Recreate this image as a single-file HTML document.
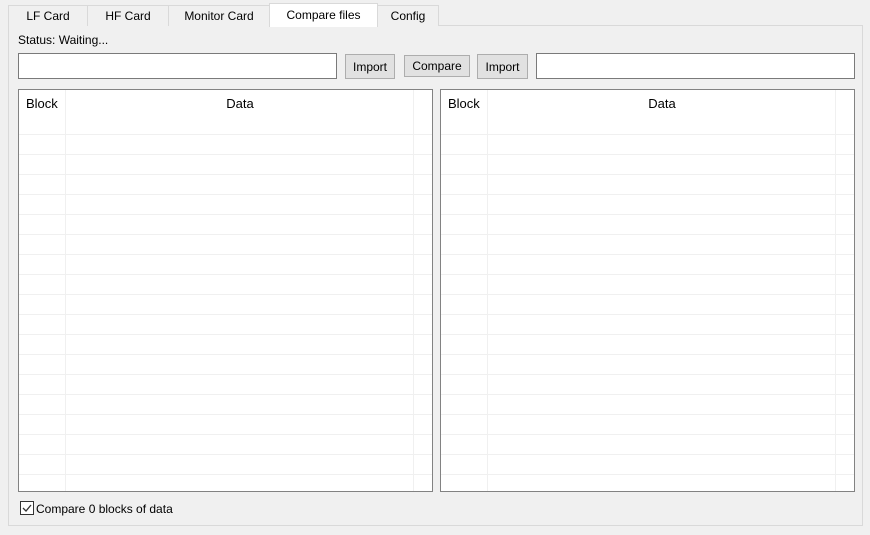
<!DOCTYPE html>
<html><head><style>
body{margin:0;width:870px;height:535px;background:#f0f0f0;font-family:"Liberation Sans",sans-serif;font-size:12px;color:#000;position:relative;overflow:hidden}
.a{position:absolute;box-sizing:border-box}
.tab{position:absolute;top:5px;height:21px;border:1px solid #d9d9d9;border-bottom:none;background:#f0f0f0;text-align:center;line-height:21px;box-sizing:border-box}
.tb{background:#fff;border:1px solid #7a7a7a}
.btn{background:#e1e1e1;border:1px solid #adadad;text-align:center}
.grid{background:#fff;border:1px solid #828282;overflow:hidden}
</style></head><body>
<div class="a" style="left:8px;top:25px;width:855px;height:501px;border:1px solid #d9d9d9;background:#f0f0f0"></div>
<div class="tab" style="left:8px;width:80px">LF Card</div>
<div class="tab" style="left:87px;width:82px">HF Card</div>
<div class="tab" style="left:168px;width:102px">Monitor Card</div>
<div class="tab" style="left:377px;width:62px">Config</div>
<div class="tab" style="left:269px;top:3px;height:24px;width:109px;background:#fff;line-height:23px;z-index:2">Compare files</div>
<div class="a" style="left:18px;top:33px">Status: Waiting...</div>
<div class="a tb" style="left:18px;top:53px;width:319px;height:26px"></div>
<div class="a btn" style="left:345px;top:54px;width:50px;height:25px;line-height:24px">Import</div>
<div class="a btn" style="left:404px;top:55px;width:66px;height:22px;line-height:20px">Compare</div>
<div class="a btn" style="left:477px;top:54px;width:51px;height:25px;line-height:24px">Import</div>
<div class="a tb" style="left:536px;top:53px;width:319px;height:26px"></div>

<div class="a grid" style="left:18px;top:89px;width:415px;height:403px">
<svg width="413" height="401" style="position:absolute;left:0;top:0">
<g stroke="#f0f0f0" stroke-width="1">
<line x1="46.5" y1="0" x2="46.5" y2="401"/><line x1="394.5" y1="0" x2="394.5" y2="401"/>
<path d="M0 44.5H413M0 64.5H413M0 84.5H413M0 104.5H413M0 124.5H413M0 144.5H413M0 164.5H413M0 184.5H413M0 204.5H413M0 224.5H413M0 244.5H413M0 264.5H413M0 284.5H413M0 304.5H413M0 324.5H413M0 344.5H413M0 364.5H413M0 384.5H413"/>
</g></svg>
<div class="a" style="left:7px;top:6px;font-size:13px">Block</div>
<div class="a" style="left:47px;width:348px;top:6px;text-align:center;font-size:13px">Data</div>
</div>
<div class="a grid" style="left:440px;top:89px;width:415px;height:403px">
<svg width="413" height="401" style="position:absolute;left:0;top:0">
<g stroke="#f0f0f0" stroke-width="1">
<line x1="46.5" y1="0" x2="46.5" y2="401"/><line x1="394.5" y1="0" x2="394.5" y2="401"/>
<path d="M0 44.5H413M0 64.5H413M0 84.5H413M0 104.5H413M0 124.5H413M0 144.5H413M0 164.5H413M0 184.5H413M0 204.5H413M0 224.5H413M0 244.5H413M0 264.5H413M0 284.5H413M0 304.5H413M0 324.5H413M0 344.5H413M0 364.5H413M0 384.5H413"/>
</g></svg>
<div class="a" style="left:7px;top:6px;font-size:13px">Block</div>
<div class="a" style="left:47px;width:348px;top:6px;text-align:center;font-size:13px">Data</div>
</div>
<svg class="a" style="left:20px;top:501px" width="14" height="14"><rect x="0.5" y="0.5" width="13" height="13" fill="#fff" stroke="#333"/><path d="M3 7l3 3 5-6" fill="none" stroke="#333" stroke-width="1.3"/></svg>
<div class="a" style="left:36px;top:502px">Compare 0 blocks of data</div>
</body></html>
